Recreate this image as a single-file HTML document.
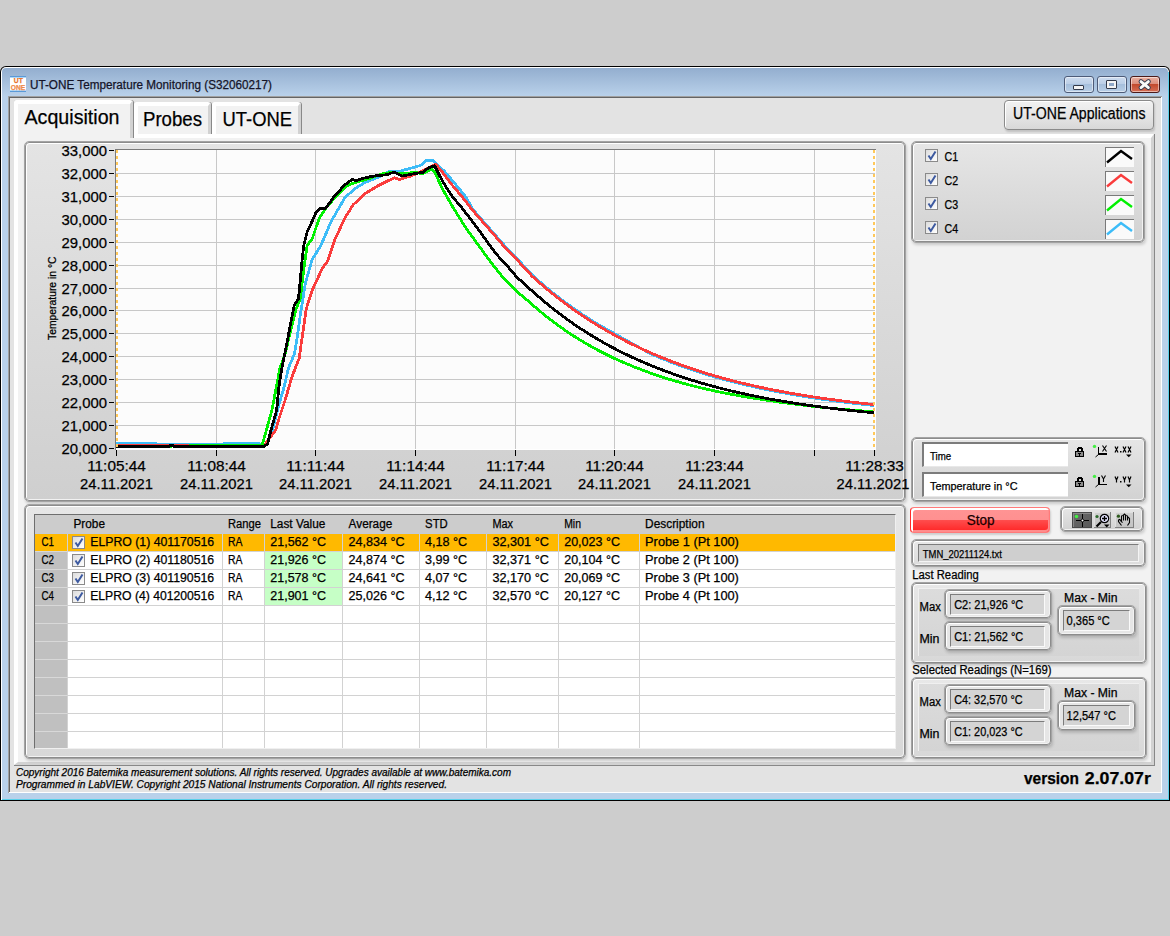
<!DOCTYPE html><html><head><meta charset="utf-8"><style>
*{box-sizing:border-box;margin:0;padding:0}
html,body{width:1170px;height:936px;overflow:hidden;background:#cdcdcd;font-family:"Liberation Sans",sans-serif;color:#000}
.a{position:absolute}
svg{position:absolute;left:0;top:0;overflow:visible}
text{font-family:"Liberation Sans",sans-serif;white-space:pre}
</style></head><body><div class="a" style="left:0px;top:66px;width:1170px;height:735px;background:#000;border-radius:6px 6px 0 0"></div>
<div class="a" style="left:1px;top:67px;width:1168px;height:733px;background:#fff;border-radius:5px 5px 0 0"></div>
<div class="a" style="left:2px;top:68px;width:1166px;height:731px;background:linear-gradient(#93aecf,#b9d1ea 28px,#b9d1ea);border-radius:4px 4px 0 0"></div>
<div class="a" style="left:1168px;top:72px;width:1px;height:728px;background:#5ad0ea"></div>
<div class="a" style="left:2px;top:799px;width:1167px;height:1px;background:#5ad0ea"></div>
<div class="a" style="left:10px;top:76px;width:16px;height:16px;background:#fff;border-top:1px solid #5a9ad8;border-bottom:1px solid #5a9ad8;box-shadow:inset 0 1px 0 #b0d8f8, inset 0 -1px 0 #b0d8f8"></div>
<div class="a" style="left:1064px;top:76px;width:30px;height:17px;border:1px solid #4d5b78;border-radius:3px;background:linear-gradient(#cddcef,#bccfe7 45%,#a6bfdc 50%,#b8cee6 100%);box-shadow:inset 0 0 0 1px rgba(255,255,255,.5)"></div>
<div class="a" style="left:1097px;top:76px;width:30px;height:17px;border:1px solid #4d5b78;border-radius:3px;background:linear-gradient(#cddcef,#bccfe7 45%,#a6bfdc 50%,#b8cee6 100%);box-shadow:inset 0 0 0 1px rgba(255,255,255,.5)"></div>
<div class="a" style="left:1130px;top:76px;width:30px;height:17px;border:1px solid #4a1a1a;border-radius:3px;background:linear-gradient(#eab0a2,#dc8e7c 45%,#c24a2e 50%,#d66e55 100%);box-shadow:inset 0 0 0 1px rgba(255,255,255,.5)"></div>
<div class="a" style="left:1073px;top:85px;width:11px;height:5px;background:#f4f4f4;border:1px solid #333a4a;border-radius:1px"></div>
<div class="a" style="left:1106px;top:80px;width:11px;height:9px;background:#f4f4f4;border:1px solid #333a4a;border-radius:1px"></div>
<div class="a" style="left:1109px;top:83px;width:5px;height:3px;background:#8fa8c8"></div>
<svg style="left:1136px;top:78px" width="17" height="13"><path d="M5 3.6 L12.4 9.6 M12.4 3.6 L5 9.6" stroke="#3a3f52" stroke-width="4.8" stroke-linecap="round"/><path d="M5 3.6 L12.4 9.6 M12.4 3.6 L5 9.6" stroke="#fafafa" stroke-width="2.8" stroke-linecap="round"/></svg>
<div class="a" style="left:8px;top:96px;width:1154px;height:697px;background:#fff;border-top:1px solid #a0a0a0;border-left:1px solid #a0a0a0"></div>
<div class="a" style="left:9px;top:97px;width:1152px;height:695px;border-top:1px solid #646464;border-left:1px solid #646464;background:#e3e3e3"></div>
<div class="a" style="left:14px;top:134px;width:1141px;height:632px;background:#888"></div>
<div class="a" style="left:14px;top:134px;width:1140px;height:631px;background:#f2f2f2;border-top:4px solid #fff;border-left:4px solid #fff;border-right:3px solid #d2d2d2;border-bottom:3px solid #d2d2d2"></div>
<div class="a" style="left:134px;top:102px;width:78px;height:32px;background:#888;border-radius:3px 3px 0 0"></div>
<div class="a" style="left:134px;top:102px;width:77px;height:32px;background:#f2f2f2;border-top:4px solid #fff;border-left:4px solid #fff;border-right:3px solid #d2d2d2;border-radius:3px 3px 0 0"></div>
<div class="a" style="left:212px;top:102px;width:90px;height:32px;background:#888;border-radius:3px 3px 0 0"></div>
<div class="a" style="left:212px;top:102px;width:89px;height:32px;background:#f2f2f2;border-top:4px solid #fff;border-left:4px solid #fff;border-right:3px solid #d2d2d2;border-radius:3px 3px 0 0"></div>
<div class="a" style="left:14px;top:100px;width:120px;height:38px;background:#888;border-radius:3px 3px 0 0"></div>
<div class="a" style="left:14px;top:100px;width:119px;height:38px;background:#f2f2f2;border-top:4px solid #fff;border-left:4px solid #fff;border-right:3px solid #d2d2d2;border-radius:3px 3px 0 0"></div>
<div class="a" style="left:18px;top:134px;width:112px;height:4px;background:#f2f2f2"></div>
<div class="a" style="left:1004px;top:100px;width:150px;height:30px;border:1px solid #8a8a8a;border-radius:4px;background:linear-gradient(#f2f2f2,#e6e6e6 50%,#d8d8d8);box-shadow:inset 1px 1px 0 #fff, 1px 2px 2px rgba(0,0,0,.15)"></div>
<div class="a" style="left:24px;top:141px;width:882px;height:361px;border:1px solid #a4a4a4;border-radius:5px;box-shadow:1px 2px 3px rgba(0,0,0,.16);"></div>
<div class="a" style="left:25px;top:142px;width:880px;height:359px;border:1px solid #8c8c8c;border-radius:4px;background:linear-gradient(#e4e4e4,#cfcfcf);box-shadow:inset 1px 1px 0 #fff, inset -1px -1px 0 #f2f2f2"></div>
<div class="a" style="left:115px;top:149px;width:761px;height:301px;background:#fff;border-top:1px solid #7a7a7a;border-left:1px solid #7a7a7a"></div>
<div class="a" style="left:116px;top:150px;width:759px;height:299px;background:#fcfcfc"></div>
<div class="a" style="left:24px;top:504px;width:882px;height:255px;border:1px solid #a4a4a4;border-radius:5px;box-shadow:1px 2px 3px rgba(0,0,0,.16);"></div>
<div class="a" style="left:25px;top:505px;width:880px;height:253px;border:1px solid #8c8c8c;border-radius:4px;background:linear-gradient(#e6e6e6,#d8d8d8);box-shadow:inset 1px 1px 0 #fff, inset -1px -1px 0 #f2f2f2"></div>
<div class="a" style="left:34px;top:514px;width:862px;height:235px;background:#fff;border-top:1px solid #6e6e6e;border-left:1px solid #6e6e6e;border-right:1px solid #f0f0f0;border-bottom:1px solid #f0f0f0"></div>
<div class="a" style="left:35px;top:515px;width:860px;height:18px;background:#cccccc"></div>
<div class="a" style="left:35px;top:533px;width:860px;height:1px;background:#c4ccd8"></div>
<div class="a" style="left:35px;top:534px;width:32px;height:214px;background:#c0c0c0"></div>
<div class="a" style="left:35px;top:534px;width:32px;height:17px;background:#ffb900"></div>
<div class="a" style="left:68px;top:534px;width:827px;height:17px;background:#ffb900"></div>
<div class="a" style="left:265px;top:552px;width:77px;height:17px;background:#c6ffc6"></div>
<div class="a" style="left:265px;top:570px;width:77px;height:17px;background:#c6ffc6"></div>
<div class="a" style="left:265px;top:588px;width:77px;height:17px;background:#c6ffc6"></div>
<svg width="1170" height="936">
<line x1="67" x2="895" y1="551.5" y2="551.5" stroke="#d2d2d2" stroke-width="1"/>
<line x1="35" x2="67" y1="551.5" y2="551.5" stroke="#d8d8d8" stroke-width="1"/>
<line x1="67" x2="895" y1="569.5" y2="569.5" stroke="#d2d2d2" stroke-width="1"/>
<line x1="35" x2="67" y1="569.5" y2="569.5" stroke="#d8d8d8" stroke-width="1"/>
<line x1="67" x2="895" y1="587.5" y2="587.5" stroke="#d2d2d2" stroke-width="1"/>
<line x1="35" x2="67" y1="587.5" y2="587.5" stroke="#d8d8d8" stroke-width="1"/>
<line x1="67" x2="895" y1="605.5" y2="605.5" stroke="#d2d2d2" stroke-width="1"/>
<line x1="35" x2="67" y1="605.5" y2="605.5" stroke="#d8d8d8" stroke-width="1"/>
<line x1="67" x2="895" y1="623.5" y2="623.5" stroke="#d2d2d2" stroke-width="1"/>
<line x1="35" x2="67" y1="623.5" y2="623.5" stroke="#d8d8d8" stroke-width="1"/>
<line x1="67" x2="895" y1="641.5" y2="641.5" stroke="#d2d2d2" stroke-width="1"/>
<line x1="35" x2="67" y1="641.5" y2="641.5" stroke="#d8d8d8" stroke-width="1"/>
<line x1="67" x2="895" y1="659.5" y2="659.5" stroke="#d2d2d2" stroke-width="1"/>
<line x1="35" x2="67" y1="659.5" y2="659.5" stroke="#d8d8d8" stroke-width="1"/>
<line x1="67" x2="895" y1="677.5" y2="677.5" stroke="#d2d2d2" stroke-width="1"/>
<line x1="35" x2="67" y1="677.5" y2="677.5" stroke="#d8d8d8" stroke-width="1"/>
<line x1="67" x2="895" y1="695.5" y2="695.5" stroke="#d2d2d2" stroke-width="1"/>
<line x1="35" x2="67" y1="695.5" y2="695.5" stroke="#d8d8d8" stroke-width="1"/>
<line x1="67" x2="895" y1="713.5" y2="713.5" stroke="#d2d2d2" stroke-width="1"/>
<line x1="35" x2="67" y1="713.5" y2="713.5" stroke="#d8d8d8" stroke-width="1"/>
<line x1="67" x2="895" y1="731.5" y2="731.5" stroke="#d2d2d2" stroke-width="1"/>
<line x1="35" x2="67" y1="731.5" y2="731.5" stroke="#d8d8d8" stroke-width="1"/>
<line x1="67.5" x2="67.5" y1="534" y2="748" stroke="#d2d2d2" stroke-width="1"/>
<line x1="222.5" x2="222.5" y1="534" y2="748" stroke="#d2d2d2" stroke-width="1"/>
<line x1="264.5" x2="264.5" y1="534" y2="748" stroke="#d2d2d2" stroke-width="1"/>
<line x1="342.5" x2="342.5" y1="534" y2="748" stroke="#d2d2d2" stroke-width="1"/>
<line x1="419.5" x2="419.5" y1="534" y2="748" stroke="#d2d2d2" stroke-width="1"/>
<line x1="486.5" x2="486.5" y1="534" y2="748" stroke="#d2d2d2" stroke-width="1"/>
<line x1="558.5" x2="558.5" y1="534" y2="748" stroke="#d2d2d2" stroke-width="1"/>
<line x1="639.5" x2="639.5" y1="534" y2="748" stroke="#d2d2d2" stroke-width="1"/></svg>
<div class="a" style="left:72px;top:536px;width:13px;height:13px;border:1px solid #8a8a8a;background:linear-gradient(135deg,#dcdcdc,#fff)"></div>
<svg style="left:73px;top:537px" width="11" height="11"><path d="M2.5 5.5 L4.8 9 L9.5 1.5" fill="none" stroke="#3d5aa0" stroke-width="2"/></svg>
<div class="a" style="left:72px;top:554px;width:13px;height:13px;border:1px solid #8a8a8a;background:linear-gradient(135deg,#dcdcdc,#fff)"></div>
<svg style="left:73px;top:555px" width="11" height="11"><path d="M2.5 5.5 L4.8 9 L9.5 1.5" fill="none" stroke="#3d5aa0" stroke-width="2"/></svg>
<div class="a" style="left:72px;top:572px;width:13px;height:13px;border:1px solid #8a8a8a;background:linear-gradient(135deg,#dcdcdc,#fff)"></div>
<svg style="left:73px;top:573px" width="11" height="11"><path d="M2.5 5.5 L4.8 9 L9.5 1.5" fill="none" stroke="#3d5aa0" stroke-width="2"/></svg>
<div class="a" style="left:72px;top:590px;width:13px;height:13px;border:1px solid #8a8a8a;background:linear-gradient(135deg,#dcdcdc,#fff)"></div>
<svg style="left:73px;top:591px" width="11" height="11"><path d="M2.5 5.5 L4.8 9 L9.5 1.5" fill="none" stroke="#3d5aa0" stroke-width="2"/></svg>
<div class="a" style="left:911px;top:141px;width:234px;height:102px;border:1px solid #a4a4a4;border-radius:5px;box-shadow:1px 2px 3px rgba(0,0,0,.16);"></div>
<div class="a" style="left:912px;top:142px;width:232px;height:100px;border:1px solid #8c8c8c;border-radius:4px;background:linear-gradient(#e6e6e6,#d2d2d2);box-shadow:inset 1px 1px 0 #fff, inset -1px -1px 0 #f2f2f2"></div>
<div class="a" style="left:925px;top:149px;width:13px;height:13px;border:1px solid #8a8a8a;background:linear-gradient(135deg,#dcdcdc,#fff)"></div>
<svg style="left:926px;top:150px" width="11" height="11"><path d="M2.5 5.5 L4.8 9 L9.5 1.5" fill="none" stroke="#3d5aa0" stroke-width="2"/></svg>
<div class="a" style="left:1105px;top:147px;width:29px;height:20px;background:#fafafa;border-top:1px solid #7a7a7a;border-left:1px solid #7a7a7a"></div>
<svg style="left:1105px;top:147px" width="29" height="20"><polyline points="2,15.5 16,4 27,12" fill="none" stroke="#000" stroke-width="2.4"/></svg>
<div class="a" style="left:925px;top:173px;width:13px;height:13px;border:1px solid #8a8a8a;background:linear-gradient(135deg,#dcdcdc,#fff)"></div>
<svg style="left:926px;top:174px" width="11" height="11"><path d="M2.5 5.5 L4.8 9 L9.5 1.5" fill="none" stroke="#3d5aa0" stroke-width="2"/></svg>
<div class="a" style="left:1105px;top:171px;width:29px;height:20px;background:#fafafa;border-top:1px solid #7a7a7a;border-left:1px solid #7a7a7a"></div>
<svg style="left:1105px;top:171px" width="29" height="20"><polyline points="2,15.5 16,4 27,12" fill="none" stroke="#fa3c3c" stroke-width="2.4"/></svg>
<div class="a" style="left:925px;top:197px;width:13px;height:13px;border:1px solid #8a8a8a;background:linear-gradient(135deg,#dcdcdc,#fff)"></div>
<svg style="left:926px;top:198px" width="11" height="11"><path d="M2.5 5.5 L4.8 9 L9.5 1.5" fill="none" stroke="#3d5aa0" stroke-width="2"/></svg>
<div class="a" style="left:1105px;top:195px;width:29px;height:20px;background:#fafafa;border-top:1px solid #7a7a7a;border-left:1px solid #7a7a7a"></div>
<svg style="left:1105px;top:195px" width="29" height="20"><polyline points="2,15.5 16,4 27,12" fill="none" stroke="#00f000" stroke-width="2.4"/></svg>
<div class="a" style="left:925px;top:221px;width:13px;height:13px;border:1px solid #8a8a8a;background:linear-gradient(135deg,#dcdcdc,#fff)"></div>
<svg style="left:926px;top:222px" width="11" height="11"><path d="M2.5 5.5 L4.8 9 L9.5 1.5" fill="none" stroke="#3d5aa0" stroke-width="2"/></svg>
<div class="a" style="left:1105px;top:219px;width:29px;height:20px;background:#fafafa;border-top:1px solid #7a7a7a;border-left:1px solid #7a7a7a"></div>
<svg style="left:1105px;top:219px" width="29" height="20"><polyline points="2,15.5 16,4 27,12" fill="none" stroke="#3cbcf8" stroke-width="2.4"/></svg>
<div class="a" style="left:911px;top:437px;width:235px;height:65px;border:1px solid #a4a4a4;border-radius:5px;box-shadow:1px 2px 3px rgba(0,0,0,.16);"></div>
<div class="a" style="left:912px;top:438px;width:233px;height:63px;border:1px solid #8c8c8c;border-radius:4px;background:linear-gradient(#e6e6e6,#d2d2d2);box-shadow:inset 1px 1px 0 #fff, inset -1px -1px 0 #f2f2f2"></div>
<div class="a" style="left:922px;top:442px;width:146px;height:25px;background:#fff;border-top:2px solid #7c7c7c;border-left:2px solid #7c7c7c;border-bottom:1px solid #e8e8e8"></div>
<svg style="left:1075px;top:446px" width="9" height="12" shape-rendering="crispEdges"><path d="M2 5 V2 H3 V1 H6 V2 H7 V5 M3 5 V2.5 H6 V5" fill="none" stroke="#000" stroke-width="1"/><rect x="0.5" y="5.5" width="8" height="5" fill="#8a8a8a" stroke="#000" stroke-width="1"/><rect x="4" y="7" width="1" height="3" fill="#000"/><rect x="3" y="7" width="3" height="1" fill="#000"/></svg>
<svg style="left:1092px;top:443px" width="17" height="14"><circle cx="2.5" cy="3.4" r="1.7" fill="#44ee44"/><path d="M6.5 4 V12" stroke="#000" stroke-width="1" shape-rendering="crispEdges"/><path d="M6 11.2 H15" stroke="#000" stroke-width="2" shape-rendering="crispEdges"/><path d="M6.5 11.5 L3.5 14" stroke="#000" stroke-width="1"/><path d="M10.5 2.5 L14.5 8.5 M14.5 2.5 L10.5 8.5" stroke="#000" stroke-width="1.1"/></svg>
<svg style="left:1114px;top:446px" width="18" height="12"><path d="M1 0.5 L4 6.5 M4 0.5 L1 6.5 M9 0.5 L12 6.5 M12 0.5 L9 6.5 M14 0.5 L17 6.5 M17 0.5 L14 6.5" stroke="#000" stroke-width="1.2"/><rect x="6" y="5" width="1.5" height="1.5" fill="#000"/><path d="M12 8.5 H17.5 L14.75 11.2 Z" fill="#000"/></svg>
<div class="a" style="left:922px;top:472px;width:146px;height:25px;background:#fff;border-top:2px solid #7c7c7c;border-left:2px solid #7c7c7c;border-bottom:1px solid #e8e8e8"></div>
<svg style="left:1075px;top:476px" width="9" height="12" shape-rendering="crispEdges"><path d="M2 5 V2 H3 V1 H6 V2 H7 V5 M3 5 V2.5 H6 V5" fill="none" stroke="#000" stroke-width="1"/><rect x="0.5" y="5.5" width="8" height="5" fill="#8a8a8a" stroke="#000" stroke-width="1"/><rect x="4" y="7" width="1" height="3" fill="#000"/><rect x="3" y="7" width="3" height="1" fill="#000"/></svg>
<svg style="left:1092px;top:473px" width="17" height="14"><circle cx="2.5" cy="3.4" r="1.7" fill="#44ee44"/><path d="M6.5 4 V12" stroke="#000" stroke-width="2" shape-rendering="crispEdges"/><path d="M6 11.2 H15" stroke="#000" stroke-width="1" shape-rendering="crispEdges"/><path d="M6.5 11.5 L3.5 14" stroke="#000" stroke-width="1"/><path d="M9.5 2.5 L11.5 6 L13.5 2.5 M11.5 6 V9" fill="none" stroke="#000" stroke-width="1.1"/></svg>
<svg style="left:1114px;top:476px" width="18" height="12"><path d="M1 0.5 L2.5 4 L4 0.5 M2.5 4 V6.5 M9 0.5 L10.5 4 L12 0.5 M10.5 4 V6.5 M14 0.5 L15.5 4 L17 0.5 M15.5 4 V6.5" fill="none" stroke="#000" stroke-width="1.2"/><rect x="6" y="5" width="1.5" height="1.5" fill="#000"/><path d="M12 8.5 H17.5 L14.75 11.2 Z" fill="#000"/></svg>
<div class="a" style="left:910px;top:507px;width:140px;height:26px;border:1px solid #ff7a7a;border-left-color:#ff2a2a;border-radius:4px;background:linear-gradient(#ff9494,#ff9090 50%,#ff4c4c 52%,#ff2424);box-shadow:inset 2px 2px 0 #fff, inset -1px -2px 0 #ff8c8c, 1px 2px 2px rgba(0,0,0,.15)"></div>
<div class="a" style="left:1060px;top:506px;width:84px;height:26px;border:1px solid #a4a4a4;border-radius:5px;box-shadow:1px 2px 3px rgba(0,0,0,.16);"></div>
<div class="a" style="left:1061px;top:507px;width:82px;height:24px;border:1px solid #8c8c8c;border-radius:4px;background:linear-gradient(#e6e6e6,#d2d2d2);box-shadow:inset 1px 1px 0 #fff, inset -1px -1px 0 #f2f2f2"></div>
<div class="a" style="left:1072px;top:512px;width:20px;height:16px;background:linear-gradient(135deg,#6a6a6a,#5a5a5a);border:1px solid #4a4a4a;box-shadow:inset 1px 1px 0 #888"></div>
<svg style="left:1072px;top:512px" width="20" height="16"><circle cx="4.5" cy="4.5" r="1.8" fill="#44ee44"/><path d="M10.5 2 V15 M4 8.5 H17" stroke="#000" stroke-width="1" shape-rendering="crispEdges"/><circle cx="10.5" cy="8.5" r="1.4" fill="#fff" stroke="#000" stroke-width="1"/></svg>
<div class="a" style="left:1094px;top:512px;width:17px;height:16px;background:linear-gradient(#d0d0d0,#c4c4c4);border-right:1px solid #808080;border-bottom:1px solid #808080;box-shadow:inset 1px 1px 0 #e0e0e0"></div>
<svg style="left:1094px;top:512px" width="18" height="16"><circle cx="3" cy="4.5" r="1.6" fill="#2c6a2c"/><circle cx="10.5" cy="6.5" r="4.2" fill="#e4e4ff" stroke="#000" stroke-width="1.2"/><path d="M10.5 4 V9 M8 6.5 H13" stroke="#000" stroke-width="1.3"/><path d="M7 10 L2.5 14.5" stroke="#000" stroke-width="2.2"/><path d="M10 12.5 H15.5 L12.75 15.5 Z" fill="#000"/></svg>
<div class="a" style="left:1115px;top:512px;width:19px;height:16px;background:linear-gradient(#d0d0d0,#c4c4c4);border-right:1px solid #808080;border-bottom:1px solid #808080;box-shadow:inset 1px 1px 0 #e0e0e0"></div>
<svg style="left:1115px;top:512px" width="19" height="16"><circle cx="3.4" cy="4.2" r="1.6" fill="#2c5a1c"/><path d="M6.5 9 V4.5 L7.5 3 M8.5 8.5 V3 L9.5 2 L10.5 3 V8.5 M11.5 3 L12.5 4.5 V8.5 M13 5 L14.5 6.5 V10.5 L12.5 13.5 M6.5 9 L4.5 7.5 L3.5 8 V9.5 L6.5 13.5 M5.5 8.7 L7.5 10.6" fill="none" stroke="#000" stroke-width="1.1"/></svg>
<div class="a" style="left:911px;top:539px;width:235px;height:28px;border:1px solid #a4a4a4;border-radius:5px;box-shadow:1px 2px 3px rgba(0,0,0,.16);"></div>
<div class="a" style="left:912px;top:540px;width:233px;height:26px;border:1px solid #8c8c8c;border-radius:4px;background:linear-gradient(#e8e8e8,#dcdcdc);box-shadow:inset 1px 1px 0 #fff, inset -1px -1px 0 #f2f2f2"></div>
<div class="a" style="left:918px;top:544px;width:221px;height:18px;background:#cfcfcf;border-top:1px solid #7c7c7c;border-left:1px solid #7c7c7c;border-bottom:1px solid #f4f4f4;border-right:1px solid #f4f4f4"></div>
<div class="a" style="left:911px;top:582px;width:236px;height:82px;border:1px solid #a4a4a4;border-radius:5px;box-shadow:1px 2px 3px rgba(0,0,0,.16);"></div>
<div class="a" style="left:912px;top:583px;width:234px;height:80px;border:1px solid #8c8c8c;border-radius:4px;background:linear-gradient(#e8e8e8,#d8d8d8);box-shadow:inset 1px 1px 0 #fff, inset -1px -1px 0 #f2f2f2"></div>
<div class="a" style="left:918px;top:588px;width:221px;height:68px;background:linear-gradient(#dcdcdc,#d4d4d4);box-shadow:inset 1px 1px 0 #f0f0f0"></div>
<div class="a" style="left:944px;top:589px;width:108px;height:30px;border:1px solid #a4a4a4;border-radius:5px;box-shadow:1px 2px 3px rgba(0,0,0,.16);"></div>
<div class="a" style="left:945px;top:590px;width:106px;height:28px;border:1px solid #8c8c8c;border-radius:4px;background:#e6e6e6;box-shadow:inset 1px 1px 0 #fff, inset -1px -1px 0 #f2f2f2"></div>
<div class="a" style="left:950px;top:594px;width:95px;height:21px;background:#d4d4d4;border-top:1px solid #7c7c7c;border-left:1px solid #7c7c7c;border-bottom:1px solid #fafafa;border-right:1px solid #fafafa"></div>
<div class="a" style="left:944px;top:621px;width:108px;height:30px;border:1px solid #a4a4a4;border-radius:5px;box-shadow:1px 2px 3px rgba(0,0,0,.16);"></div>
<div class="a" style="left:945px;top:622px;width:106px;height:28px;border:1px solid #8c8c8c;border-radius:4px;background:#e6e6e6;box-shadow:inset 1px 1px 0 #fff, inset -1px -1px 0 #f2f2f2"></div>
<div class="a" style="left:950px;top:626px;width:95px;height:21px;background:#d4d4d4;border-top:1px solid #7c7c7c;border-left:1px solid #7c7c7c;border-bottom:1px solid #fafafa;border-right:1px solid #fafafa"></div>
<div class="a" style="left:1057px;top:605px;width:79px;height:31px;border:1px solid #a4a4a4;border-radius:5px;box-shadow:1px 2px 3px rgba(0,0,0,.16);"></div>
<div class="a" style="left:1058px;top:606px;width:77px;height:29px;border:1px solid #8c8c8c;border-radius:4px;background:#e6e6e6;box-shadow:inset 1px 1px 0 #fff, inset -1px -1px 0 #f2f2f2"></div>
<div class="a" style="left:1063px;top:610px;width:67px;height:21px;background:#d4d4d4;border-top:1px solid #7c7c7c;border-left:1px solid #7c7c7c;border-bottom:1px solid #fafafa;border-right:1px solid #fafafa"></div>
<div class="a" style="left:911px;top:677px;width:236px;height:82px;border:1px solid #a4a4a4;border-radius:5px;box-shadow:1px 2px 3px rgba(0,0,0,.16);"></div>
<div class="a" style="left:912px;top:678px;width:234px;height:80px;border:1px solid #8c8c8c;border-radius:4px;background:linear-gradient(#e8e8e8,#d8d8d8);box-shadow:inset 1px 1px 0 #fff, inset -1px -1px 0 #f2f2f2"></div>
<div class="a" style="left:918px;top:683px;width:221px;height:68px;background:linear-gradient(#dcdcdc,#d4d4d4);box-shadow:inset 1px 1px 0 #f0f0f0"></div>
<div class="a" style="left:944px;top:684px;width:108px;height:30px;border:1px solid #a4a4a4;border-radius:5px;box-shadow:1px 2px 3px rgba(0,0,0,.16);"></div>
<div class="a" style="left:945px;top:685px;width:106px;height:28px;border:1px solid #8c8c8c;border-radius:4px;background:#e6e6e6;box-shadow:inset 1px 1px 0 #fff, inset -1px -1px 0 #f2f2f2"></div>
<div class="a" style="left:950px;top:689px;width:95px;height:21px;background:#d4d4d4;border-top:1px solid #7c7c7c;border-left:1px solid #7c7c7c;border-bottom:1px solid #fafafa;border-right:1px solid #fafafa"></div>
<div class="a" style="left:944px;top:716px;width:108px;height:30px;border:1px solid #a4a4a4;border-radius:5px;box-shadow:1px 2px 3px rgba(0,0,0,.16);"></div>
<div class="a" style="left:945px;top:717px;width:106px;height:28px;border:1px solid #8c8c8c;border-radius:4px;background:#e6e6e6;box-shadow:inset 1px 1px 0 #fff, inset -1px -1px 0 #f2f2f2"></div>
<div class="a" style="left:950px;top:721px;width:95px;height:21px;background:#d4d4d4;border-top:1px solid #7c7c7c;border-left:1px solid #7c7c7c;border-bottom:1px solid #fafafa;border-right:1px solid #fafafa"></div>
<div class="a" style="left:1057px;top:700px;width:79px;height:31px;border:1px solid #a4a4a4;border-radius:5px;box-shadow:1px 2px 3px rgba(0,0,0,.16);"></div>
<div class="a" style="left:1058px;top:701px;width:77px;height:29px;border:1px solid #8c8c8c;border-radius:4px;background:#e6e6e6;box-shadow:inset 1px 1px 0 #fff, inset -1px -1px 0 #f2f2f2"></div>
<div class="a" style="left:1063px;top:705px;width:67px;height:21px;background:#d4d4d4;border-top:1px solid #7c7c7c;border-left:1px solid #7c7c7c;border-bottom:1px solid #fafafa;border-right:1px solid #fafafa"></div>
<!--BODY-->
<svg width="1170" height="936">
<line x1="116" x2="875" y1="173.5" y2="173.5" stroke="#c8c8c8" stroke-width="1"/>
<line x1="116" x2="875" y1="196.5" y2="196.5" stroke="#c8c8c8" stroke-width="1"/>
<line x1="116" x2="875" y1="219.5" y2="219.5" stroke="#c8c8c8" stroke-width="1"/>
<line x1="116" x2="875" y1="242.5" y2="242.5" stroke="#c8c8c8" stroke-width="1"/>
<line x1="116" x2="875" y1="265.5" y2="265.5" stroke="#c8c8c8" stroke-width="1"/>
<line x1="116" x2="875" y1="288.5" y2="288.5" stroke="#c8c8c8" stroke-width="1"/>
<line x1="116" x2="875" y1="310.5" y2="310.5" stroke="#c8c8c8" stroke-width="1"/>
<line x1="116" x2="875" y1="333.5" y2="333.5" stroke="#c8c8c8" stroke-width="1"/>
<line x1="116" x2="875" y1="356.5" y2="356.5" stroke="#c8c8c8" stroke-width="1"/>
<line x1="116" x2="875" y1="379.5" y2="379.5" stroke="#c8c8c8" stroke-width="1"/>
<line x1="116" x2="875" y1="402.5" y2="402.5" stroke="#c8c8c8" stroke-width="1"/>
<line x1="116" x2="875" y1="425.5" y2="425.5" stroke="#c8c8c8" stroke-width="1"/>
<line x1="216.5" x2="216.5" y1="150" y2="449" stroke="#c8c8c8" stroke-width="1"/>
<line x1="315.5" x2="315.5" y1="150" y2="449" stroke="#c8c8c8" stroke-width="1"/>
<line x1="415.5" x2="415.5" y1="150" y2="449" stroke="#c8c8c8" stroke-width="1"/>
<line x1="515.5" x2="515.5" y1="150" y2="449" stroke="#c8c8c8" stroke-width="1"/>
<line x1="614.5" x2="614.5" y1="150" y2="449" stroke="#c8c8c8" stroke-width="1"/>
<line x1="714.5" x2="714.5" y1="150" y2="449" stroke="#c8c8c8" stroke-width="1"/>
<line x1="814.5" x2="814.5" y1="150" y2="449" stroke="#c8c8c8" stroke-width="1"/>
<line x1="109" x2="114" y1="150.5" y2="150.5" stroke="#000" stroke-width="1"/>
<line x1="109" x2="114" y1="173.5" y2="173.5" stroke="#000" stroke-width="1"/>
<line x1="109" x2="114" y1="196.5" y2="196.5" stroke="#000" stroke-width="1"/>
<line x1="109" x2="114" y1="219.5" y2="219.5" stroke="#000" stroke-width="1"/>
<line x1="109" x2="114" y1="242.5" y2="242.5" stroke="#000" stroke-width="1"/>
<line x1="109" x2="114" y1="265.5" y2="265.5" stroke="#000" stroke-width="1"/>
<line x1="109" x2="114" y1="288.5" y2="288.5" stroke="#000" stroke-width="1"/>
<line x1="109" x2="114" y1="310.5" y2="310.5" stroke="#000" stroke-width="1"/>
<line x1="109" x2="114" y1="333.5" y2="333.5" stroke="#000" stroke-width="1"/>
<line x1="109" x2="114" y1="356.5" y2="356.5" stroke="#000" stroke-width="1"/>
<line x1="109" x2="114" y1="379.5" y2="379.5" stroke="#000" stroke-width="1"/>
<line x1="109" x2="114" y1="402.5" y2="402.5" stroke="#000" stroke-width="1"/>
<line x1="109" x2="114" y1="425.5" y2="425.5" stroke="#000" stroke-width="1"/>
<line x1="109" x2="114" y1="448.5" y2="448.5" stroke="#000" stroke-width="1"/>
<line x1="116.5" x2="116.5" y1="450" y2="456" stroke="#000" stroke-width="1"/>
<line x1="216.5" x2="216.5" y1="450" y2="456" stroke="#000" stroke-width="1"/>
<line x1="315.5" x2="315.5" y1="450" y2="456" stroke="#000" stroke-width="1"/>
<line x1="415.5" x2="415.5" y1="450" y2="456" stroke="#000" stroke-width="1"/>
<line x1="515.5" x2="515.5" y1="450" y2="456" stroke="#000" stroke-width="1"/>
<line x1="614.5" x2="614.5" y1="450" y2="456" stroke="#000" stroke-width="1"/>
<line x1="714.5" x2="714.5" y1="450" y2="456" stroke="#000" stroke-width="1"/>
<line x1="814.5" x2="814.5" y1="450" y2="456" stroke="#000" stroke-width="1"/>
<line x1="874.5" x2="874.5" y1="450" y2="456" stroke="#000" stroke-width="1"/>
<svg x="116" y="150" width="759" height="299" viewBox="116 150 759 299">
<polyline points="116.0,443.4 156.0,443.4 156.5,444.6 224.0,444.6 224.5,443.4 266.2,444.0 272.6,429.8 279.0,404.2 283.8,388.1 288.7,367.3 294.3,354.5 297.5,335.3 300.3,315.0 305.4,283.3 312.2,259.4 320.8,245.7 331.0,221.8 344.7,197.9 355.0,188.5 365.0,182.5 377.8,177.4 389.8,170.9 400.9,170.9 416.3,166.7 420.6,165.4 426.5,160.3 432.5,160.3 444.5,171.4 454.7,183.3 465.0,196.0 473.3,209.9 484.5,222.7 495.7,235.5 506.9,248.4 516.5,258.0 530.0,272.7 532.0,274.9 534.0,276.7 536.0,278.5 538.0,280.2 540.0,282.0 542.0,283.7 544.0,285.4 546.0,287.1 548.0,288.8 550.0,290.4 552.0,292.1 554.0,293.7 556.0,295.2 558.0,296.8 560.0,298.4 562.0,299.9 564.0,301.4 566.0,302.9 568.0,304.4 570.0,305.8 572.0,307.2 574.0,308.7 576.0,310.1 578.0,311.4 580.0,312.8 582.0,314.2 584.0,315.5 586.0,316.8 588.0,318.1 590.0,319.4 592.0,320.7 594.0,321.9 596.0,323.2 598.0,324.4 650.0,353.5 652.0,354.4 654.0,355.3 656.0,356.1 658.0,357.0 660.0,357.8 662.0,358.6 664.0,359.4 666.0,360.2 668.0,361.0 670.0,361.8 672.0,362.6 674.0,363.4 676.0,364.1 678.0,364.8 680.0,365.6 682.0,366.3 684.0,367.0 686.0,367.7 688.0,368.4 690.0,369.1 692.0,369.8 694.0,370.5 696.0,371.1 698.0,371.8 700.0,372.4 702.0,373.1 704.0,373.7 706.0,374.3 708.0,374.9 710.0,375.5 712.0,376.1 714.0,376.7 716.0,377.2 718.0,377.8 720.0,378.4 722.0,378.9 724.0,379.5 726.0,380.0 728.0,380.5 730.0,381.1 732.0,381.6 734.0,382.1 736.0,382.6 738.0,383.1 740.0,383.6 742.0,384.1 744.0,384.5 746.0,385.0 748.0,385.5 750.0,385.9 752.0,386.4 754.0,386.9 756.0,387.3 758.0,387.7 760.0,388.2 762.0,388.6 764.0,389.0 766.0,389.4 768.0,389.9 770.0,390.3 772.0,390.7 774.0,391.1 776.0,391.4 778.0,391.8 780.0,392.2 782.0,392.6 784.0,393.0 786.0,393.3 788.0,393.7 790.0,394.0 792.0,394.4 794.0,394.7 796.0,395.1 798.0,395.4 800.0,395.8 802.0,396.1 804.0,396.4 806.0,396.7 808.0,397.1 810.0,397.4 812.0,397.7 814.0,398.0 816.0,398.3 818.0,398.6 820.0,398.9 822.0,399.2 824.0,399.5 826.0,399.7 828.0,400.0 830.0,400.3 832.0,400.6 834.0,400.8 836.0,401.1 838.0,401.4 840.0,401.6 842.0,401.9 844.0,402.1 846.0,402.4 848.0,402.6 850.0,402.9 852.0,403.1 854.0,403.3 856.0,403.6 858.0,403.8 860.0,404.0 862.0,404.2 864.0,404.5 866.0,404.7 868.0,404.9 870.0,405.1 872.0,405.3 874.0,405.5" fill="none" stroke="#3cbcf8" stroke-width="2.8" stroke-linejoin="round" shape-rendering="crispEdges"/>
<polyline points="116.0,445.0 264.6,445.0 275.8,429.8 279.0,418.6 285.4,399.4 291.9,376.9 299.1,358.5 301.5,341.7 303.9,325.6 306.2,309.0 312.2,290.2 322.5,268.0 327.6,261.1 334.4,240.6 344.7,218.4 353.2,204.7 363.5,195.3 365.0,193.6 377.8,185.9 394.1,177.8 399.2,179.5 412.0,175.6 423.1,170.5 435.6,164.2 442.8,172.6 452.4,185.4 462.0,196.7 473.3,211.1 484.5,223.9 495.7,236.7 506.9,249.6 516.5,259.2 530.0,273.9 532.0,276.1 534.0,277.9 536.0,279.7 538.0,281.4 540.0,283.2 542.0,284.9 544.0,286.6 546.0,288.3 548.0,290.0 550.0,291.6 552.0,293.2 554.0,294.9 556.0,296.4 558.0,298.0 560.0,299.6 562.0,301.1 564.0,302.6 566.0,304.1 568.0,305.6 570.0,307.0 572.0,308.4 574.0,309.9 576.0,311.3 578.0,312.6 580.0,314.0 582.0,315.4 584.0,316.7 586.0,318.0 588.0,319.3 590.0,320.6 592.0,321.9 594.0,323.1 596.0,324.4 598.0,325.6 600.0,326.8 602.0,328.0 604.0,329.1 606.0,330.3 608.0,331.4 610.0,332.6 612.0,333.7 614.0,334.8 616.0,335.9 618.0,337.0 620.0,338.1 622.0,339.1 624.0,340.1 626.0,341.2 628.0,342.2 630.0,343.2 632.0,344.2 634.0,345.1 636.0,346.1 638.0,347.1 640.0,348.0 642.0,348.9 644.0,349.9 646.0,350.8 648.0,351.7 650.0,352.5 652.0,353.4 654.0,354.3 656.0,355.1 658.0,356.0 660.0,356.8 662.0,357.6 664.0,358.4 666.0,359.2 668.0,360.0 670.0,360.8 672.0,361.6 674.0,362.4 676.0,363.1 678.0,363.8 680.0,364.6 682.0,365.3 684.0,366.0 686.0,366.7 688.0,367.4 690.0,368.1 692.0,368.8 694.0,369.5 696.0,370.1 698.0,370.8 700.0,371.4 702.0,372.1 704.0,372.7 706.0,373.3 708.0,373.9 710.0,374.5 712.0,375.1 714.0,375.7 716.0,376.2 718.0,376.8 720.0,377.4 722.0,377.9 724.0,378.5 726.0,379.0 728.0,379.5 730.0,380.1 732.0,380.6 734.0,381.1 736.0,381.6 738.0,382.1 740.0,382.6 742.0,383.1 744.0,383.5 746.0,384.0 748.0,384.5 750.0,384.9 752.0,385.4 754.0,385.9 756.0,386.3 758.0,386.7 760.0,387.2 762.0,387.6 764.0,388.0 766.0,388.4 768.0,388.9 770.0,389.3 772.0,389.7 774.0,390.1 776.0,390.4 778.0,390.8 780.0,391.2 782.0,391.6 784.0,392.0 786.0,392.3 788.0,392.7 790.0,393.0 792.0,393.4 794.0,393.7 796.0,394.1 798.0,394.4 800.0,394.8 802.0,395.1 804.0,395.4 806.0,395.7 808.0,396.1 810.0,396.4 812.0,396.7 814.0,397.0 816.0,397.3 818.0,397.6 820.0,397.9 822.0,398.2 824.0,398.5 826.0,398.7 828.0,399.0 830.0,399.3 832.0,399.6 834.0,399.8 836.0,400.1 838.0,400.4 840.0,400.6 842.0,400.9 844.0,401.1 846.0,401.4 848.0,401.6 850.0,401.9 852.0,402.1 854.0,402.3 856.0,402.6 858.0,402.8 860.0,403.0 862.0,403.2 864.0,403.5 866.0,403.7 868.0,403.9 870.0,404.1 872.0,404.3 874.0,404.5" fill="none" stroke="#fa3c3c" stroke-width="2.8" stroke-linejoin="round" shape-rendering="crispEdges"/>
<polyline points="116.0,446.8 262.2,445.0 267.8,425.0 271.8,410.6 277.4,381.7 279.8,368.9 285.4,352.9 290.3,332.0 295.9,309.6 300.3,298.7 303.7,269.7 307.1,245.7 312.2,238.9 319.1,218.4 325.9,208.1 336.2,196.2 348.1,185.0 358.4,181.6 370.0,178.2 382.1,173.9 390.6,172.4 403.5,173.9 412.9,172.4 423.1,173.5 431.2,169.2 434.8,172.6 442.8,189.5 452.4,206.3 465.3,227.1 478.1,244.7 490.9,262.4 503.7,278.4 516.5,291.2 530.0,302.5 532.0,304.4 534.0,306.2 536.0,307.9 538.0,309.6 540.0,311.3 542.0,312.9 544.0,314.6 546.0,316.2 548.0,317.7 550.0,319.3 552.0,320.8 554.0,322.3 556.0,323.8 558.0,325.3 560.0,326.7 562.0,328.1 564.0,329.5 566.0,330.9 568.0,332.2 570.0,333.6 572.0,334.9 574.0,336.2 576.0,337.4 578.0,338.7 580.0,339.9 582.0,341.1 584.0,342.3 586.0,343.5 588.0,344.6 590.0,345.8 592.0,346.9 594.0,348.0 596.0,349.1 598.0,350.2 600.0,351.2 602.0,352.3 604.0,353.3 606.0,354.3 608.0,355.3 610.0,356.2 612.0,357.2 614.0,358.2 616.0,359.1 618.0,360.0 620.0,360.9 622.0,361.8 624.0,362.7 626.0,363.5 628.0,364.4 630.0,365.2 632.0,366.0 634.0,366.9 636.0,367.6 638.0,368.4 640.0,369.2 642.0,370.0 644.0,370.7 646.0,371.4 648.0,372.2 650.0,372.9 652.0,373.6 654.0,374.3 656.0,375.0 658.0,375.6 660.0,376.3 662.0,376.9 664.0,377.6 666.0,378.2 668.0,378.9 670.0,379.5 672.0,380.1 674.0,380.7 676.0,381.2 678.0,381.8 680.0,382.4 682.0,382.9 684.0,383.5 686.0,384.0 688.0,384.6 690.0,385.1 692.0,385.6 694.0,386.1 696.0,386.6 698.0,387.1 700.0,387.6 702.0,388.1 704.0,388.5 706.0,389.0 708.0,389.4 710.0,389.9 712.0,390.4 714.0,390.8 716.0,391.2 718.0,391.6 720.0,392.1 722.0,392.5 724.0,392.9 726.0,393.2 728.0,393.6 730.0,394.0 732.0,394.4 734.0,394.8 736.0,395.1 738.0,395.5 740.0,395.9 742.0,396.2 744.0,396.6 746.0,396.9 748.0,397.2 750.0,397.6 752.0,397.9 754.0,398.2 756.0,398.5 758.0,398.8 760.0,399.1 762.0,399.5 764.0,399.8 766.0,400.1 768.0,400.4 770.0,400.7 772.0,401.0 774.0,401.3 776.0,401.6 778.0,401.9 780.0,402.2 782.0,402.4 784.0,402.7 786.0,403.0 788.0,403.3 790.0,403.5 792.0,403.8 794.0,404.0 796.0,404.3 798.0,404.5 800.0,404.8 802.0,405.0 804.0,405.3 806.0,405.5 808.0,405.7 810.0,406.0 812.0,406.2 814.0,406.4 816.0,406.6 818.0,406.8 820.0,407.1 822.0,407.3 824.0,407.5 826.0,407.7 828.0,407.9 830.0,408.1 832.0,408.3 834.0,408.5 836.0,408.7 838.0,408.9 840.0,409.0 842.0,409.2 844.0,409.4 846.0,409.6 848.0,409.8 850.0,409.9 852.0,410.1 854.0,410.3 856.0,410.4 858.0,410.6 860.0,410.8 862.0,410.9 864.0,411.1 866.0,411.2 868.0,411.4 870.0,411.6 872.0,411.7 874.0,411.9" fill="none" stroke="#00f000" stroke-width="2.8" stroke-linejoin="round" shape-rendering="crispEdges"/>
<polyline points="116.0,446.8 168.5,446.8 169.5,445.6 173.0,445.6 174.0,446.8 264.0,446.8 267.8,443.4 270.2,433.0 276.6,410.6 279.0,386.5 281.4,370.5 284.6,354.5 288.7,333.7 292.7,312.8 294.3,305.0 298.5,299.0 300.3,279.9 302.0,261.1 303.7,245.7 307.1,232.0 309.7,226.9 315.6,213.2 319.9,208.1 325.9,208.1 334.4,196.2 344.7,185.0 352.4,179.1 355.8,180.8 363.5,178.2 373.5,176.1 386.4,174.8 394.1,172.1 402.6,176.1 412.9,173.9 423.1,172.2 428.2,168.0 434.7,165.8 439.6,175.8 446.0,187.0 452.4,196.7 462.0,207.9 471.7,220.7 481.3,233.5 489.3,244.7 497.3,255.2 506.9,265.6 516.5,276.8 530.0,289.2 532.0,290.8 534.0,292.6 536.0,294.4 538.0,296.2 540.0,297.9 542.0,299.6 544.0,301.3 546.0,303.0 548.0,304.6 550.0,306.3 552.0,307.9 554.0,309.5 556.0,311.0 558.0,312.6 560.0,314.1 562.0,315.6 564.0,317.1 566.0,318.5 568.0,320.0 570.0,321.4 572.0,322.8 574.0,324.2 576.0,325.5 578.0,326.9 580.0,328.2 582.0,329.5 584.0,330.8 586.0,332.1 588.0,333.4 590.0,334.6 592.0,335.8 594.0,337.0 596.0,338.2 598.0,339.4 600.0,340.6 602.0,341.7 604.0,342.9 606.0,344.0 608.0,345.1 610.0,346.2 612.0,347.2 614.0,348.3 616.0,349.3 618.0,350.4 620.0,351.4 622.0,352.4 624.0,353.4 626.0,354.3 628.0,355.3 630.0,356.2 632.0,357.2 634.0,358.1 636.0,359.0 638.0,359.9 640.0,360.8 642.0,361.7 644.0,362.6 646.0,363.4 648.0,364.2 650.0,365.1 652.0,365.9 654.0,366.7 656.0,367.5 658.0,368.3 660.0,369.1 662.0,369.8 664.0,370.6 666.0,371.3 668.0,372.1 670.0,372.8 672.0,373.5 674.0,374.2 676.0,374.9 678.0,375.6 680.0,376.3 682.0,376.9 684.0,377.6 686.0,378.3 688.0,378.9 690.0,379.5 692.0,380.2 694.0,380.8 696.0,381.4 698.0,382.0 700.0,382.6 702.0,383.2 704.0,383.8 706.0,384.3 708.0,384.9 710.0,385.4 712.0,386.0 714.0,386.5 716.0,387.1 718.0,387.6 720.0,388.1 722.0,388.6 724.0,389.1 726.0,389.6 728.0,390.1 730.0,390.6 732.0,391.1 734.0,391.5 736.0,392.0 738.0,392.5 740.0,392.9 742.0,393.4 744.0,393.8 746.0,394.2 748.0,394.7 750.0,395.1 752.0,395.5 754.0,395.9 756.0,396.3 758.0,396.7 760.0,397.1 762.0,397.5 764.0,397.9 766.0,398.3 768.0,398.7 770.0,399.0 772.0,399.4 774.0,399.8 776.0,400.1 778.0,400.5 780.0,400.8 782.0,401.1 784.0,401.5 786.0,401.8 788.0,402.1 790.0,402.5 792.0,402.8 794.0,403.1 796.0,403.4 798.0,403.7 800.0,404.0 802.0,404.3 804.0,404.6 806.0,404.9 808.0,405.2 810.0,405.5 812.0,405.8 814.0,406.0 816.0,406.3 818.0,406.6 820.0,406.8 822.0,407.1 824.0,407.4 826.0,407.6 828.0,407.9 830.0,408.1 832.0,408.4 834.0,408.6 836.0,408.8 838.0,409.1 840.0,409.3 842.0,409.5 844.0,409.8 846.0,410.0 848.0,410.2 850.0,410.4 852.0,410.6 854.0,410.8 856.0,411.0 858.0,411.2 860.0,411.4 862.0,411.6 864.0,411.9 866.0,412.0 868.0,412.2 870.0,412.4 872.0,412.6 874.0,412.8" fill="none" stroke="#000" stroke-width="2.8" stroke-linejoin="round" shape-rendering="crispEdges"/>
</svg>
<line x1="117" x2="117" y1="150" y2="449" stroke="#ffc85a" stroke-width="2" stroke-dasharray="3,3"/>
<line x1="874" x2="874" y1="150" y2="449" stroke="#ffc85a" stroke-width="2" stroke-dasharray="3,3"/></svg><svg width="1170" height="936"><text x="18.3" y="83" font-size="7" textLength="9" lengthAdjust="spacingAndGlyphs" font-weight="bold" text-anchor="middle" fill="#e8742a" stroke="#e8742a" stroke-width="0.25">UT</text>
<text x="18" y="90" font-size="7" textLength="14.5" lengthAdjust="spacingAndGlyphs" font-weight="bold" text-anchor="middle" fill="#ee8a4a" stroke="#ee8a4a" stroke-width="0.25">ONE</text>
<text x="30" y="89" font-size="12" textLength="242" lengthAdjust="spacingAndGlyphs" fill="#141428" stroke="#141428" stroke-width="0.25">UT-ONE Temperature Monitoring (S32060217)</text>
<text x="24.5" y="124" font-size="21" textLength="95" lengthAdjust="spacingAndGlyphs" fill="#000" stroke="#000" stroke-width="0.25">Acquisition</text>
<text x="143" y="125.5" font-size="21" textLength="59" lengthAdjust="spacingAndGlyphs" fill="#000" stroke="#000" stroke-width="0.25">Probes</text>
<text x="222.5" y="125.5" font-size="21" textLength="69.5" lengthAdjust="spacingAndGlyphs" fill="#000" stroke="#000" stroke-width="0.25">UT-ONE</text>
<text x="1013" y="119" font-size="16" textLength="132.5" lengthAdjust="spacingAndGlyphs" fill="#000" stroke="#000" stroke-width="0.25">UT-ONE Applications</text>
<text x="107" y="155.8" font-size="15.5" textLength="45.5" lengthAdjust="spacingAndGlyphs" text-anchor="end" fill="#000" stroke="#000" stroke-width="0.25">33,000</text>
<text x="107" y="178.8" font-size="15.5" textLength="45.5" lengthAdjust="spacingAndGlyphs" text-anchor="end" fill="#000" stroke="#000" stroke-width="0.25">32,000</text>
<text x="107" y="201.8" font-size="15.5" textLength="45.5" lengthAdjust="spacingAndGlyphs" text-anchor="end" fill="#000" stroke="#000" stroke-width="0.25">31,000</text>
<text x="107" y="224.8" font-size="15.5" textLength="45.5" lengthAdjust="spacingAndGlyphs" text-anchor="end" fill="#000" stroke="#000" stroke-width="0.25">30,000</text>
<text x="107" y="247.8" font-size="15.5" textLength="45.5" lengthAdjust="spacingAndGlyphs" text-anchor="end" fill="#000" stroke="#000" stroke-width="0.25">29,000</text>
<text x="107" y="270.8" font-size="15.5" textLength="45.5" lengthAdjust="spacingAndGlyphs" text-anchor="end" fill="#000" stroke="#000" stroke-width="0.25">28,000</text>
<text x="107" y="293.8" font-size="15.5" textLength="45.5" lengthAdjust="spacingAndGlyphs" text-anchor="end" fill="#000" stroke="#000" stroke-width="0.25">27,000</text>
<text x="107" y="315.8" font-size="15.5" textLength="45.5" lengthAdjust="spacingAndGlyphs" text-anchor="end" fill="#000" stroke="#000" stroke-width="0.25">26,000</text>
<text x="107" y="338.8" font-size="15.5" textLength="45.5" lengthAdjust="spacingAndGlyphs" text-anchor="end" fill="#000" stroke="#000" stroke-width="0.25">25,000</text>
<text x="107" y="361.8" font-size="15.5" textLength="45.5" lengthAdjust="spacingAndGlyphs" text-anchor="end" fill="#000" stroke="#000" stroke-width="0.25">24,000</text>
<text x="107" y="384.8" font-size="15.5" textLength="45.5" lengthAdjust="spacingAndGlyphs" text-anchor="end" fill="#000" stroke="#000" stroke-width="0.25">23,000</text>
<text x="107" y="407.8" font-size="15.5" textLength="45.5" lengthAdjust="spacingAndGlyphs" text-anchor="end" fill="#000" stroke="#000" stroke-width="0.25">22,000</text>
<text x="107" y="430.8" font-size="15.5" textLength="45.5" lengthAdjust="spacingAndGlyphs" text-anchor="end" fill="#000" stroke="#000" stroke-width="0.25">21,000</text>
<text x="107" y="453.8" font-size="15.5" textLength="45.5" lengthAdjust="spacingAndGlyphs" text-anchor="end" fill="#000" stroke="#000" stroke-width="0.25">20,000</text>
<text x="116.5" y="470.5" font-size="15.5" textLength="58.6" lengthAdjust="spacingAndGlyphs" text-anchor="middle" fill="#000" stroke="#000" stroke-width="0.25">11:05:44</text>
<text x="116.5" y="488.5" font-size="15.5" textLength="72.8" lengthAdjust="spacingAndGlyphs" text-anchor="middle" fill="#000" stroke="#000" stroke-width="0.25">24.11.2021</text>
<text x="216.5" y="470.5" font-size="15.5" textLength="58.6" lengthAdjust="spacingAndGlyphs" text-anchor="middle" fill="#000" stroke="#000" stroke-width="0.25">11:08:44</text>
<text x="216.5" y="488.5" font-size="15.5" textLength="72.8" lengthAdjust="spacingAndGlyphs" text-anchor="middle" fill="#000" stroke="#000" stroke-width="0.25">24.11.2021</text>
<text x="315.5" y="470.5" font-size="15.5" textLength="58.6" lengthAdjust="spacingAndGlyphs" text-anchor="middle" fill="#000" stroke="#000" stroke-width="0.25">11:11:44</text>
<text x="315.5" y="488.5" font-size="15.5" textLength="72.8" lengthAdjust="spacingAndGlyphs" text-anchor="middle" fill="#000" stroke="#000" stroke-width="0.25">24.11.2021</text>
<text x="415.5" y="470.5" font-size="15.5" textLength="58.6" lengthAdjust="spacingAndGlyphs" text-anchor="middle" fill="#000" stroke="#000" stroke-width="0.25">11:14:44</text>
<text x="415.5" y="488.5" font-size="15.5" textLength="72.8" lengthAdjust="spacingAndGlyphs" text-anchor="middle" fill="#000" stroke="#000" stroke-width="0.25">24.11.2021</text>
<text x="515.5" y="470.5" font-size="15.5" textLength="58.6" lengthAdjust="spacingAndGlyphs" text-anchor="middle" fill="#000" stroke="#000" stroke-width="0.25">11:17:44</text>
<text x="515.5" y="488.5" font-size="15.5" textLength="72.8" lengthAdjust="spacingAndGlyphs" text-anchor="middle" fill="#000" stroke="#000" stroke-width="0.25">24.11.2021</text>
<text x="614.5" y="470.5" font-size="15.5" textLength="58.6" lengthAdjust="spacingAndGlyphs" text-anchor="middle" fill="#000" stroke="#000" stroke-width="0.25">11:20:44</text>
<text x="614.5" y="488.5" font-size="15.5" textLength="72.8" lengthAdjust="spacingAndGlyphs" text-anchor="middle" fill="#000" stroke="#000" stroke-width="0.25">24.11.2021</text>
<text x="714.5" y="470.5" font-size="15.5" textLength="58.6" lengthAdjust="spacingAndGlyphs" text-anchor="middle" fill="#000" stroke="#000" stroke-width="0.25">11:23:44</text>
<text x="714.5" y="488.5" font-size="15.5" textLength="72.8" lengthAdjust="spacingAndGlyphs" text-anchor="middle" fill="#000" stroke="#000" stroke-width="0.25">24.11.2021</text>
<text x="874.5" y="470.5" font-size="15.5" textLength="58.6" lengthAdjust="spacingAndGlyphs" text-anchor="middle" fill="#000" stroke="#000" stroke-width="0.25">11:28:33</text>
<text x="873" y="488.5" font-size="15.5" textLength="72.8" lengthAdjust="spacingAndGlyphs" text-anchor="middle" fill="#000" stroke="#000" stroke-width="0.25">24.11.2021</text>
<text x="-340" y="56" font-size="10" textLength="83.5" lengthAdjust="spacingAndGlyphs" fill="#000" stroke="#000" stroke-width="0.25" transform="rotate(-90 0 0)">Temperature in °C</text>
<text x="73.5" y="528" font-size="12" textLength="31.5" lengthAdjust="spacingAndGlyphs" fill="#000" stroke="#000" stroke-width="0.25">Probe</text>
<text x="228" y="528" font-size="12" textLength="33" lengthAdjust="spacingAndGlyphs" fill="#000" stroke="#000" stroke-width="0.25">Range</text>
<text x="270.3" y="528" font-size="12" textLength="55" lengthAdjust="spacingAndGlyphs" fill="#000" stroke="#000" stroke-width="0.25">Last Value</text>
<text x="348.6" y="528" font-size="12" textLength="43.7" lengthAdjust="spacingAndGlyphs" fill="#000" stroke="#000" stroke-width="0.25">Average</text>
<text x="425.1" y="528" font-size="12" textLength="22.6" lengthAdjust="spacingAndGlyphs" fill="#000" stroke="#000" stroke-width="0.25">STD</text>
<text x="492.4" y="528" font-size="12" textLength="20.6" lengthAdjust="spacingAndGlyphs" fill="#000" stroke="#000" stroke-width="0.25">Max</text>
<text x="564.2" y="528" font-size="12" textLength="16.8" lengthAdjust="spacingAndGlyphs" fill="#000" stroke="#000" stroke-width="0.25">Min</text>
<text x="645.1" y="528" font-size="12" textLength="59.4" lengthAdjust="spacingAndGlyphs" fill="#000" stroke="#000" stroke-width="0.25">Description</text>
<text x="41.5" y="546" font-size="12" textLength="12.5" lengthAdjust="spacingAndGlyphs" fill="#000" stroke="#000" stroke-width="0.25">C1</text>
<text x="90.2" y="546" font-size="12" textLength="124" lengthAdjust="spacingAndGlyphs" fill="#000" stroke="#000" stroke-width="0.25">ELPRO (1) 401170516</text>
<text x="228" y="546" font-size="12" textLength="14.5" lengthAdjust="spacingAndGlyphs" fill="#000" stroke="#000" stroke-width="0.25">RA</text>
<text x="270.3" y="546" font-size="12" textLength="55.7" lengthAdjust="spacingAndGlyphs" fill="#000" stroke="#000" stroke-width="0.25">21,562 °C</text>
<text x="348.6" y="546" font-size="12" textLength="56" lengthAdjust="spacingAndGlyphs" fill="#000" stroke="#000" stroke-width="0.25">24,834 °C</text>
<text x="425.1" y="546" font-size="12" textLength="42.1" lengthAdjust="spacingAndGlyphs" fill="#000" stroke="#000" stroke-width="0.25">4,18 °C</text>
<text x="492.4" y="546" font-size="12" textLength="56.5" lengthAdjust="spacingAndGlyphs" fill="#000" stroke="#000" stroke-width="0.25">32,301 °C</text>
<text x="564.2" y="546" font-size="12" textLength="55.8" lengthAdjust="spacingAndGlyphs" fill="#000" stroke="#000" stroke-width="0.25">20,023 °C</text>
<text x="645.1" y="546" font-size="12" textLength="93.8" lengthAdjust="spacingAndGlyphs" fill="#000" stroke="#000" stroke-width="0.25">Probe 1 (Pt 100)</text>
<text x="41.5" y="564" font-size="12" textLength="12.5" lengthAdjust="spacingAndGlyphs" fill="#000" stroke="#000" stroke-width="0.25">C2</text>
<text x="90.2" y="564" font-size="12" textLength="124" lengthAdjust="spacingAndGlyphs" fill="#000" stroke="#000" stroke-width="0.25">ELPRO (2) 401180516</text>
<text x="228" y="564" font-size="12" textLength="14.5" lengthAdjust="spacingAndGlyphs" fill="#000" stroke="#000" stroke-width="0.25">RA</text>
<text x="270.3" y="564" font-size="12" textLength="55.7" lengthAdjust="spacingAndGlyphs" fill="#000" stroke="#000" stroke-width="0.25">21,926 °C</text>
<text x="348.6" y="564" font-size="12" textLength="56" lengthAdjust="spacingAndGlyphs" fill="#000" stroke="#000" stroke-width="0.25">24,874 °C</text>
<text x="425.1" y="564" font-size="12" textLength="42.1" lengthAdjust="spacingAndGlyphs" fill="#000" stroke="#000" stroke-width="0.25">3,99 °C</text>
<text x="492.4" y="564" font-size="12" textLength="56.5" lengthAdjust="spacingAndGlyphs" fill="#000" stroke="#000" stroke-width="0.25">32,371 °C</text>
<text x="564.2" y="564" font-size="12" textLength="55.8" lengthAdjust="spacingAndGlyphs" fill="#000" stroke="#000" stroke-width="0.25">20,104 °C</text>
<text x="645.1" y="564" font-size="12" textLength="93.8" lengthAdjust="spacingAndGlyphs" fill="#000" stroke="#000" stroke-width="0.25">Probe 2 (Pt 100)</text>
<text x="41.5" y="582" font-size="12" textLength="12.5" lengthAdjust="spacingAndGlyphs" fill="#000" stroke="#000" stroke-width="0.25">C3</text>
<text x="90.2" y="582" font-size="12" textLength="124" lengthAdjust="spacingAndGlyphs" fill="#000" stroke="#000" stroke-width="0.25">ELPRO (3) 401190516</text>
<text x="228" y="582" font-size="12" textLength="14.5" lengthAdjust="spacingAndGlyphs" fill="#000" stroke="#000" stroke-width="0.25">RA</text>
<text x="270.3" y="582" font-size="12" textLength="55.7" lengthAdjust="spacingAndGlyphs" fill="#000" stroke="#000" stroke-width="0.25">21,578 °C</text>
<text x="348.6" y="582" font-size="12" textLength="56" lengthAdjust="spacingAndGlyphs" fill="#000" stroke="#000" stroke-width="0.25">24,641 °C</text>
<text x="425.1" y="582" font-size="12" textLength="42.1" lengthAdjust="spacingAndGlyphs" fill="#000" stroke="#000" stroke-width="0.25">4,07 °C</text>
<text x="492.4" y="582" font-size="12" textLength="56.5" lengthAdjust="spacingAndGlyphs" fill="#000" stroke="#000" stroke-width="0.25">32,170 °C</text>
<text x="564.2" y="582" font-size="12" textLength="55.8" lengthAdjust="spacingAndGlyphs" fill="#000" stroke="#000" stroke-width="0.25">20,069 °C</text>
<text x="645.1" y="582" font-size="12" textLength="93.8" lengthAdjust="spacingAndGlyphs" fill="#000" stroke="#000" stroke-width="0.25">Probe 3 (Pt 100)</text>
<text x="41.5" y="600" font-size="12" textLength="12.5" lengthAdjust="spacingAndGlyphs" fill="#000" stroke="#000" stroke-width="0.25">C4</text>
<text x="90.2" y="600" font-size="12" textLength="124" lengthAdjust="spacingAndGlyphs" fill="#000" stroke="#000" stroke-width="0.25">ELPRO (4) 401200516</text>
<text x="228" y="600" font-size="12" textLength="14.5" lengthAdjust="spacingAndGlyphs" fill="#000" stroke="#000" stroke-width="0.25">RA</text>
<text x="270.3" y="600" font-size="12" textLength="55.7" lengthAdjust="spacingAndGlyphs" fill="#000" stroke="#000" stroke-width="0.25">21,901 °C</text>
<text x="348.6" y="600" font-size="12" textLength="56" lengthAdjust="spacingAndGlyphs" fill="#000" stroke="#000" stroke-width="0.25">25,026 °C</text>
<text x="425.1" y="600" font-size="12" textLength="42.1" lengthAdjust="spacingAndGlyphs" fill="#000" stroke="#000" stroke-width="0.25">4,12 °C</text>
<text x="492.4" y="600" font-size="12" textLength="56.5" lengthAdjust="spacingAndGlyphs" fill="#000" stroke="#000" stroke-width="0.25">32,570 °C</text>
<text x="564.2" y="600" font-size="12" textLength="55.8" lengthAdjust="spacingAndGlyphs" fill="#000" stroke="#000" stroke-width="0.25">20,127 °C</text>
<text x="645.1" y="600" font-size="12" textLength="93.8" lengthAdjust="spacingAndGlyphs" fill="#000" stroke="#000" stroke-width="0.25">Probe 4 (Pt 100)</text>
<text x="944.5" y="160.5" font-size="12" textLength="13.6" lengthAdjust="spacingAndGlyphs" fill="#000" stroke="#000" stroke-width="0.25">C1</text>
<text x="944.5" y="184.5" font-size="12" textLength="13.6" lengthAdjust="spacingAndGlyphs" fill="#000" stroke="#000" stroke-width="0.25">C2</text>
<text x="944.5" y="208.5" font-size="12" textLength="13.6" lengthAdjust="spacingAndGlyphs" fill="#000" stroke="#000" stroke-width="0.25">C3</text>
<text x="944.5" y="232.5" font-size="12" textLength="13.6" lengthAdjust="spacingAndGlyphs" fill="#000" stroke="#000" stroke-width="0.25">C4</text>
<text x="930" y="460.0" font-size="11" textLength="21.2" lengthAdjust="spacingAndGlyphs" fill="#000" stroke="#000" stroke-width="0.25">Time</text>
<text x="930" y="489.6" font-size="11" textLength="87.5" lengthAdjust="spacingAndGlyphs" fill="#000" stroke="#000" stroke-width="0.25">Temperature in °C</text>
<text x="966.8" y="525" font-size="15" textLength="27.8" lengthAdjust="spacingAndGlyphs" fill="#1a0000" stroke="#1a0000" stroke-width="0.25">Stop</text>
<text x="922.8" y="557.5" font-size="11" textLength="79" lengthAdjust="spacingAndGlyphs" fill="#000" stroke="#000" stroke-width="0.25">TMN_20211124.txt</text>
<text x="912.3" y="578.6" font-size="12" textLength="66.4" lengthAdjust="spacingAndGlyphs" fill="#000" stroke="#000" stroke-width="0.25">Last Reading</text>
<text x="919.5" y="610.5" font-size="12" textLength="21.3" lengthAdjust="spacingAndGlyphs" fill="#000" stroke="#000" stroke-width="0.25">Max</text>
<text x="919.5" y="642.5" font-size="12" textLength="20" lengthAdjust="spacingAndGlyphs" fill="#000" stroke="#000" stroke-width="0.25">Min</text>
<text x="954.2" y="609" font-size="12" textLength="69.1" lengthAdjust="spacingAndGlyphs" fill="#000" stroke="#000" stroke-width="0.25">C2: 21,926 °C</text>
<text x="954.2" y="641" font-size="12" textLength="69.1" lengthAdjust="spacingAndGlyphs" fill="#000" stroke="#000" stroke-width="0.25">C1: 21,562 °C</text>
<text x="1064" y="601.6" font-size="12" textLength="53.5" lengthAdjust="spacingAndGlyphs" fill="#000" stroke="#000" stroke-width="0.25">Max - Min</text>
<text x="1066.6" y="624.7" font-size="12" textLength="43.2" lengthAdjust="spacingAndGlyphs" fill="#000" stroke="#000" stroke-width="0.25">0,365 °C</text>
<text x="912.3" y="673.6" font-size="12" textLength="139.2" lengthAdjust="spacingAndGlyphs" fill="#000" stroke="#000" stroke-width="0.25">Selected Readings (N=169)</text>
<text x="919.5" y="705.5" font-size="12" textLength="21.3" lengthAdjust="spacingAndGlyphs" fill="#000" stroke="#000" stroke-width="0.25">Max</text>
<text x="919.5" y="737.5" font-size="12" textLength="20" lengthAdjust="spacingAndGlyphs" fill="#000" stroke="#000" stroke-width="0.25">Min</text>
<text x="954.2" y="704" font-size="12" textLength="68.4" lengthAdjust="spacingAndGlyphs" fill="#000" stroke="#000" stroke-width="0.25">C4: 32,570 °C</text>
<text x="954.2" y="736" font-size="12" textLength="68.4" lengthAdjust="spacingAndGlyphs" fill="#000" stroke="#000" stroke-width="0.25">C1: 20,023 °C</text>
<text x="1064" y="696.6" font-size="12" textLength="53.5" lengthAdjust="spacingAndGlyphs" fill="#000" stroke="#000" stroke-width="0.25">Max - Min</text>
<text x="1066.6" y="719.7" font-size="12" textLength="49.3" lengthAdjust="spacingAndGlyphs" fill="#000" stroke="#000" stroke-width="0.25">12,547 °C</text>
<text x="1024" y="784.3" font-size="16" textLength="55" lengthAdjust="spacingAndGlyphs" font-weight="bold" fill="#000" stroke="#000" stroke-width="0.25">version</text>
<text x="1084.8" y="784.3" font-size="16" textLength="66" lengthAdjust="spacingAndGlyphs" font-weight="bold" fill="#000" stroke="#000" stroke-width="0.25">2.07.07r</text>
<text x="16" y="776" font-size="10" textLength="495" lengthAdjust="spacingAndGlyphs" font-style="italic" fill="#000" stroke="#000" stroke-width="0.25">Copyright 2016 Batemika measurement solutions. All rights reserved. Upgrades available at www.batemika.com</text>
<text x="16" y="787.5" font-size="10" textLength="431" lengthAdjust="spacingAndGlyphs" font-style="italic" fill="#000" stroke="#000" stroke-width="0.25">Programmed in LabVIEW. Copyright 2015 National Instruments Corporation. All rights reserved.</text></svg></body></html>
